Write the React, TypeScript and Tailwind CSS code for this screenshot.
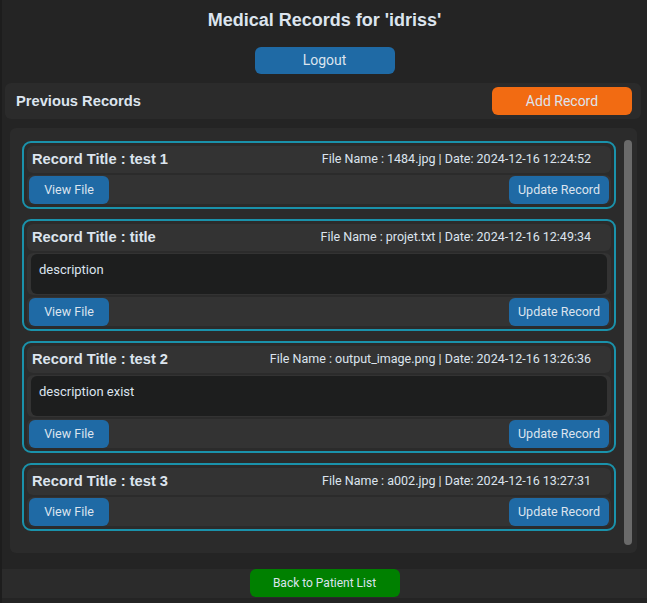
type RecordItem = {
  title: string;
  fileName: string;
  date: string;
  description?: string;
};

const records: RecordItem[] = [
  { title: "test 1", fileName: "1484.jpg", date: "2024-12-16 12:24:52" },
  { title: "title", fileName: "projet.txt", date: "2024-12-16 12:49:34", description: "description" },
  { title: "test 2", fileName: "output_image.png", date: "2024-12-16 13:26:36", description: "description exist" },
  { title: "test 3", fileName: "a002.jpg", date: "2024-12-16 13:27:31" },
];

export default function App() {
  return (
    <div className="flex h-[603px] flex-col overflow-hidden border-l-2 border-[#1d1d1d] bg-[#242424] font-['Roboto',sans-serif] text-[#dce4ee]">
      <h1 className="pt-[9px] text-center font-['Liberation_Sans',Arial,sans-serif] text-[18px] font-bold leading-[22px]">
        Medical Records for 'idriss'
      </h1>

      <button className="mx-auto mt-[16px] h-[27px] w-[140px] rounded-md bg-[#1f6aa5] text-[14px]">
        Logout
      </button>

      <section className="ml-[3px] mr-[6px] mt-[9px] flex h-[36px] items-center justify-between rounded-md bg-[#2b2b2b] pl-[11px] pr-[9px]">
        <h2 className="font-['Liberation_Sans',Arial,sans-serif] text-[14.7px] font-bold">Previous Records</h2>
        <button className="h-[28px] w-[140px] rounded-md bg-[#f26b12] text-[14px]">Add Record</button>
      </section>

      <section className="ml-[8px] mr-[10px] mt-[9px] flex h-[425px] rounded-md bg-[#2b2b2b] pr-[5px]">
        <div className="flex w-[606px] flex-col gap-[10px] pl-[12px] pt-[13px]">
          {records.map((record) => (
            <RecordCard key={record.title} record={record} />
          ))}
        </div>
        <div className="ml-[8px] mt-[12px] h-[405px] w-[8px] rounded-full bg-[#6a6a6a]" />
      </section>

      <footer className="mt-[16px] flex h-[29px] justify-center bg-[#2b2b2b]">
        <button className="h-[28px] w-[150px] rounded-md bg-[#008000] text-[12px]">Back to Patient List</button>
      </footer>
    </div>
  );
}

function RecordCard({ record }: { record: RecordItem }) {
  return (
    <div className="flex flex-col gap-[2px] rounded-[9px] border-2 border-[#1a92ab] p-[3px]">
      <div className="flex h-[27px] items-center justify-between rounded-md bg-[#333333] pl-[5px] pr-[20px]">
        <span className="font-['Liberation_Sans',Arial,sans-serif] text-[14.7px] font-bold">
          Record Title : {record.title}
        </span>
        <span className="text-[12.5px]">
          File Name : {record.fileName} | Date: {record.date}
        </span>
      </div>

      {record.description && (
        <div className="h-[42px] rounded-md bg-[#333333] px-[4px] py-[1px]">
          <div className="h-[40px] rounded-md bg-[#1d1e1e] px-[8px] pt-[8px] text-[13px] leading-[16px]">
            {record.description}
          </div>
        </div>
      )}

      <div className="flex h-[29px] items-center justify-between rounded-md bg-[#333333] px-[2px]">
        <button className="h-[28px] w-[80px] rounded-md bg-[#1f6aa5] pt-[1px] text-[12.5px]">View File</button>
        <button className="h-[28px] w-[100px] rounded-md bg-[#1f6aa5] pt-[1px] text-[12.5px]">Update Record</button>
      </div>
    </div>
  );
}
